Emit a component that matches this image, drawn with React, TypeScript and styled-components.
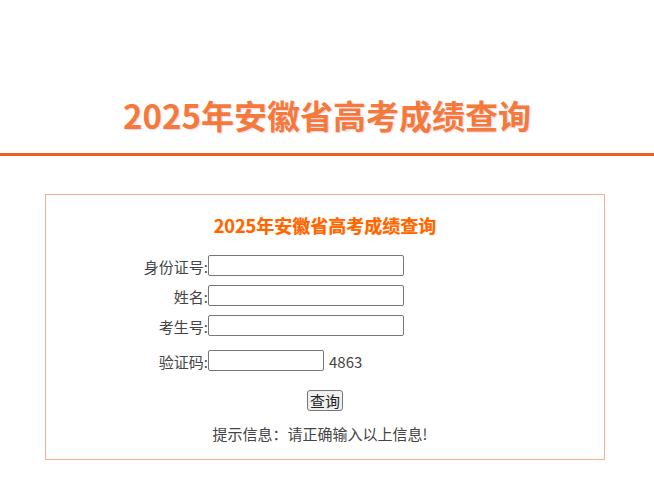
import React from "react";
import styled, { createGlobalStyle } from "styled-components";

const Global = createGlobalStyle`
  html, body { margin: 0; padding: 0; background: #fff; }
  body { font-family: "Noto Sans CJK SC", "Noto Sans", sans-serif; color: #333; }
`;

const Header = styled.header`
  padding-top: 90px;
  padding-bottom: 13px;
  border-bottom: 3px solid #ea5f28;
  text-align: center;
`;

const MainTitle = styled.h1`
  margin: 0;
  font-size: 33px;
  line-height: 50px;
  font-weight: 700;
  color: #f47a3c;
  text-shadow: 1px 1px 1px #ffd3df;
`;

const Panel = styled.section`
  margin: 38px 0 0 45px;
  width: 560px;
  height: 266px;
  border: 1px solid #f6b08e;
  padding-top: 15px;
  box-sizing: border-box;
`;

const PanelTitle = styled.h2`
  margin: 0 0 15px;
  text-align: center;
  font-size: 18px;
  line-height: 30px;
  font-weight: 700;
  color: #ff6600;
  text-shadow: 0 0 1px #ffb080;
`;

const Form = styled.div`
  display: flex;
  flex-direction: column;
  gap: 9px;
`;

const Row = styled.div<{ $extraTop?: number }>`
  display: flex;
  align-items: flex-end;
  height: 21px;
  margin-top: ${(p) => p.$extraTop ?? 0}px;
  font-size: 15px;
`;

const Label = styled.label`
  width: 162px;
  text-align: right;
  color: #444;
  white-space: nowrap;
  line-height: 19px;
`;

const Input = styled.input<{ $w: number }>`
  width: ${(p) => p.$w}px;
  height: 21px;
  box-sizing: border-box;
  border: 1px solid #767676;
  border-radius: 2px;
  padding: 1px 2px;
  margin: 0;
  font-size: 14px;
  background: #fff;
`;

const Code = styled.span`
  margin-left: 5px;
  color: #444;
  font-size: 15px;
  line-height: 19px;
`;

const ButtonRow = styled.div`
  display: flex;
  justify-content: center;
  margin-top: 19px;
`;

const Button = styled.button`
  height: 21px;
  padding: 0 2px;
  font-family: inherit;
  font-size: 15px;
  line-height: 19px;
  color: #222;
  background: #efefef;
  border: 1px solid #767676;
  border-radius: 3px;
`;

const Hint = styled.p`
  margin: 13px 0 0;
  padding-right: 10px;
  text-align: center;
  font-size: 15px;
  line-height: 20px;
  color: #444;
`;

export default function App() {
  return (
    <>
      <Global />
      <Header>
        <MainTitle>2025年安徽省高考成绩查询</MainTitle>
      </Header>
      <Panel>
        <PanelTitle>2025年安徽省高考成绩查询</PanelTitle>
        <Form>
          <Row>
            <Label>身份证号:</Label>
            <Input $w={196} />
          </Row>
          <Row>
            <Label>姓名:</Label>
            <Input $w={196} />
          </Row>
          <Row>
            <Label>考生号:</Label>
            <Input $w={196} />
          </Row>
          <Row $extraTop={5}>
            <Label>验证码:</Label>
            <Input $w={116} />
            <Code>4863</Code>
          </Row>
        </Form>
        <ButtonRow>
          <Button>查询</Button>
        </ButtonRow>
        <Hint>提示信息：请正确输入以上信息!</Hint>
      </Panel>
    </>
  );
}
